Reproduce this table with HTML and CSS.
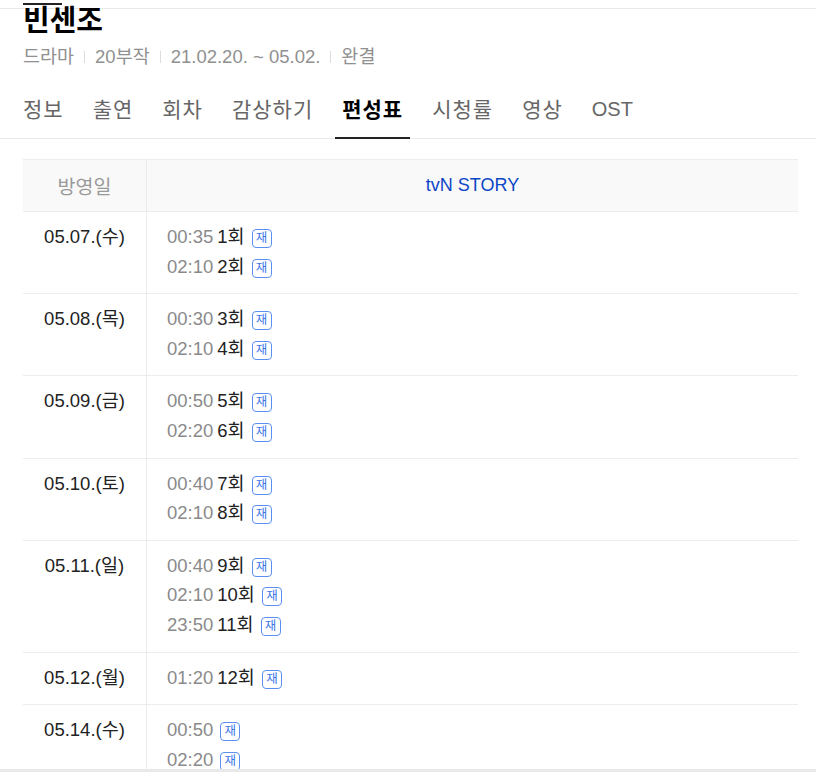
FILE: index.html
```html
<!DOCTYPE html>
<html lang="ko">
<head>
  <meta charset="UTF-8" />
  <meta name="viewport" content="width=device-width, initial-scale=1.0"/>
  <title>빈센조 편성표</title>
  <link rel="stylesheet" href="styles.css">
</head>
<body>
  <div class="topbar"><span class="topbar-active"></span></div>

  <h1 class="title">빈센조</h1>
  <div class="meta">
    <span>드라마</span><span class="sep"></span>
    <span>20부작</span><span class="sep"></span>
    <span>21.02.20. ~ 05.02.</span><span class="sep"></span>
    <span>완결</span>
  </div>

  <ul class="tabs">
    <li>정보</li>
    <li>출연</li>
    <li>회차</li>
    <li>감상하기</li>
    <li class="active">편성표</li>
    <li>시청률</li>
    <li>영상</li>
    <li class="latin">OST</li>
  </ul>

  <table class="schedule">
    <thead>
      <tr>
        <th class="col-date">방영일</th>
        <th class="col-channel">tvN STORY</th>
      </tr>
    </thead>
    <tbody id="scheduleBody"></tbody>
  </table>

  <div class="scrollbar"></div>

  <script>
    const schedule = [
      { date: '05.07.(수)', items: [['00:35', '1회'], ['02:10', '2회']] },
      { date: '05.08.(목)', items: [['00:30', '3회'], ['02:10', '4회']] },
      { date: '05.09.(금)', items: [['00:50', '5회'], ['02:20', '6회']] },
      { date: '05.10.(토)', items: [['00:40', '7회'], ['02:10', '8회']] },
      { date: '05.11.(일)', items: [['00:40', '9회'], ['02:10', '10회'], ['23:50', '11회']] },
      { date: '05.12.(월)', items: [['01:20', '12회']] },
      { date: '05.14.(수)', items: [['00:50', ''], ['02:20', '']] },
      { date: '05.15.(목)', items: [['00:50', ''], ['02:20', '']] }
    ];

    const body = document.getElementById('scheduleBody');
    schedule.forEach(day => {
      const tr = document.createElement('tr');
      const lines = day.items.map(([time, ep]) =>
        `<div class="line"><span class="time">${time}</span>${ep ? `<span class="ep">${ep}</span>` : ''}<span class="badge">재</span></div>`
      ).join('');
      tr.innerHTML = `<td class="col-date">${day.date}</td><td class="col-channel">${lines}</td>`;
      body.appendChild(tr);
    });
  </script>
</body>
</html>
```

FILE: styles.css
```css
body {
  margin: 0;
  padding: 0 18px 0 23px;
  font-family: 'Liberation Sans', 'Noto Sans CJK KR', sans-serif;
  color: #222;
  background: #fff;
}
.topbar {
  height: 5px;
  margin: 0 -18px 0 -23px;
  padding-left: 23px;
  border-bottom: 1px solid #e9e9e9;
}
.topbar-active {
  display: block;
  width: 39px;
  height: 2px;
  margin-top: 3px;
  background: #222;
}
.title {
  margin: -2px 0 0;
  font-size: 29px;
  line-height: 28px;
  font-weight: bold;
  color: #000;
}
.meta {
  display: flex;
  align-items: center;
  margin-top: 10px;
  font-size: 18.5px;
  line-height: 24px;
  color: #909090;
}
.sep {
  width: 1px;
  height: 12px;
  margin: 0 10px;
  background: #dcdcdc;
}
.tabs {
  display: flex;
  list-style: none;
  margin: 13px -18px 0 -23px;
  padding: 0 0 0 16px;
  border-bottom: 1px solid #ebebeb;
}
.tabs li {
  padding: 0 7px;
  margin-right: 15px;
  font-size: 21px;
  letter-spacing: 1px;
  line-height: 55px;
  color: #666;
}
.tabs li.latin {
  font-size: 20px;
  letter-spacing: 0;
}
.tabs li.active {
  font-weight: bold;
  color: #000;
  border-bottom: 2px solid #222;
  margin-bottom: -1px;
}
.schedule {
  width: 100%;
  margin-top: 20px;
  border-collapse: collapse;
  font-size: 18.5px;
}
.schedule th {
  height: 51px;
  padding: 0;
  background: #f9f9f9;
  border-top: 1px solid #ececec;
  border-bottom: 1px solid #ececec;
  font-weight: normal;
  font-size: 18px;
}
th.col-date {
  font-size: 19.5px;
  color: #999;
}
th.col-channel {
  color: #0b46c7;
}
.col-date {
  width: 123px;
  border-right: 1px solid #ececec;
}
.schedule td {
  padding: 10px 0 12px;
  border-bottom: 1px solid #ececec;
  vertical-align: top;
  line-height: 29.6px;
}
td.col-date {
  text-align: center;
  color: #222;
}
td.col-channel {
  padding-left: 20px;
}
.line {
  height: 29.6px;
  white-space: nowrap;
}
.time {
  color: #8a8a8a;
}
.ep {
  margin-left: 4px;
  color: #222;
}
.badge {
  display: inline-block;
  box-sizing: border-box;
  width: 20px;
  height: 19px;
  margin-left: 7px;
  border: 1px solid #5b8ff2;
  border-radius: 4px;
  font-size: 12.5px;
  line-height: 17px;
  text-align: center;
  vertical-align: 1px;
  color: #3d78ea;
}
.scrollbar {
  position: fixed;
  left: 0;
  right: 0;
  bottom: 0;
  height: 3px;
  background: #e9e9e9;
}
```
